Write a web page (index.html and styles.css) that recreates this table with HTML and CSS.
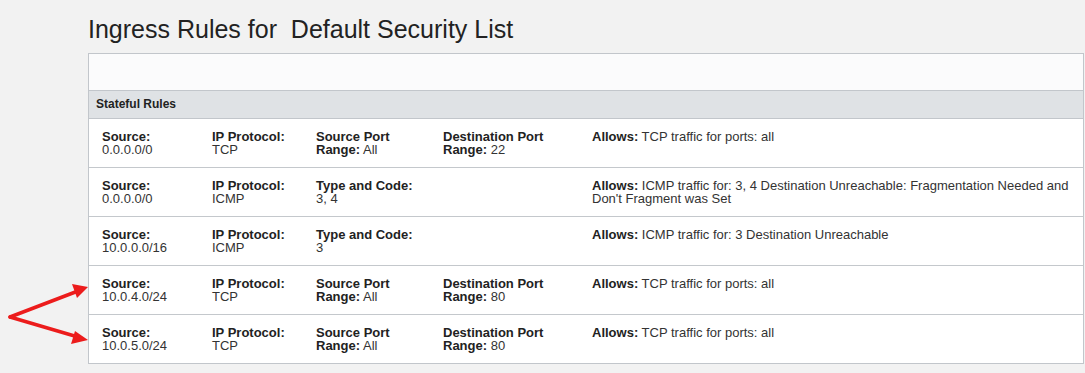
FILE: index.html
```html
<!DOCTYPE html>
<html lang="en">
<head>
    <meta charset="UTF-8">
    <title>Ingress Rules</title>
    <link rel="stylesheet" href="styles.css">
</head>
<body>
    <div class="page">
        <h1 class="title">Ingress Rules for&nbsp; Default Security List</h1>

        <div class="panel">
            <div class="toolbar"></div>
            <div class="section-head">Stateful Rules</div>

            <div class="rule">
                <div class="col src"><b>Source:</b><br>0.0.0.0/0</div>
                <div class="col proto"><b>IP Protocol:</b><br>TCP</div>
                <div class="col sport"><b>Source Port<br>Range:</b> All</div>
                <div class="col dport"><b>Destination Port<br>Range:</b> 22</div>
                <div class="col allows"><b>Allows:</b> TCP traffic for ports: all</div>
            </div>
            <div class="rule">
                <div class="col src"><b>Source:</b><br>0.0.0.0/0</div>
                <div class="col proto"><b>IP Protocol:</b><br>ICMP</div>
                <div class="col sport"><b>Type and Code:</b><br>3, 4</div>
                <div class="col dport"></div>
                <div class="col allows"><b>Allows:</b> ICMP traffic for: 3, 4 Destination Unreachable: Fragmentation Needed and Don't Fragment was Set</div>
            </div>
            <div class="rule">
                <div class="col src"><b>Source:</b><br>10.0.0.0/16</div>
                <div class="col proto"><b>IP Protocol:</b><br>ICMP</div>
                <div class="col sport"><b>Type and Code:</b><br>3</div>
                <div class="col dport"></div>
                <div class="col allows"><b>Allows:</b> ICMP traffic for: 3 Destination Unreachable</div>
            </div>
            <div class="rule">
                <div class="col src"><b>Source:</b><br>10.0.4.0/24</div>
                <div class="col proto"><b>IP Protocol:</b><br>TCP</div>
                <div class="col sport"><b>Source Port<br>Range:</b> All</div>
                <div class="col dport"><b>Destination Port<br>Range:</b> 80</div>
                <div class="col allows"><b>Allows:</b> TCP traffic for ports: all</div>
            </div>
            <div class="rule">
                <div class="col src"><b>Source:</b><br>10.0.5.0/24</div>
                <div class="col proto"><b>IP Protocol:</b><br>TCP</div>
                <div class="col sport"><b>Source Port<br>Range:</b> All</div>
                <div class="col dport"><b>Destination Port<br>Range:</b> 80</div>
                <div class="col allows"><b>Allows:</b> TCP traffic for ports: all</div>
            </div>
        </div>
    </div>

    <!-- red pointer arrows drawn over the left margin -->
    <svg class="arrows" width="100" height="80" viewBox="0 0 100 80">
        <g stroke="#ec1c1c" stroke-width="3.5" stroke-linecap="round" fill="none">
            <polyline points="10,37 78,11"/>
            <polyline points="10,37 78,57"/>
        </g>
        <g fill="#ec1c1c">
            <polygon points="88,7 72,4 77,18"/>
            <polygon points="88,60 75,51 71,64"/>
        </g>
    </svg>
</body>
</html>
```

FILE: styles.css
```css
body {
    margin: 0;
    background: #f2f2f2;
    font-family: "Liberation Sans", Arial, sans-serif;
    color: #333;
}

.page {
    padding: 17px 1px 0 88px;
}

.title {
    margin: 0 0 11px;
    font-size: 25px;
    font-weight: normal;
    line-height: 25px;
    color: #222;
}

.panel {
    background: #fff;
    border: 1px solid #c2c6cb;
}

.toolbar {
    height: 36px;
    background: #fbfbfc;
}

.section-head {
    height: 27px;
    line-height: 27px;
    padding-left: 7px;
    background: #dfe2e5;
    border-top: 1px solid #c2c6cb;
    border-bottom: 1px solid #c2c6cb;
    font-size: 12px;
    font-weight: bold;
    color: #222;
}

.rule {
    display: flex;
    height: 48px;
    padding: 0 6px 0 13px;
    border-bottom: 1px solid #c4c8cc;
    font-size: 13px;
    line-height: 13px;
}

.rule:last-child {
    border-bottom: none;
}

.col {
    padding-top: 11px;
}

.col b {
    color: #222;
}

.src { width: 110px; }
.proto { width: 104px; }
.sport { width: 127px; }
.dport { width: 149px; }
.allows { flex: 1; }

.arrows {
    position: absolute;
    left: 0;
    top: 280px;
}
```
